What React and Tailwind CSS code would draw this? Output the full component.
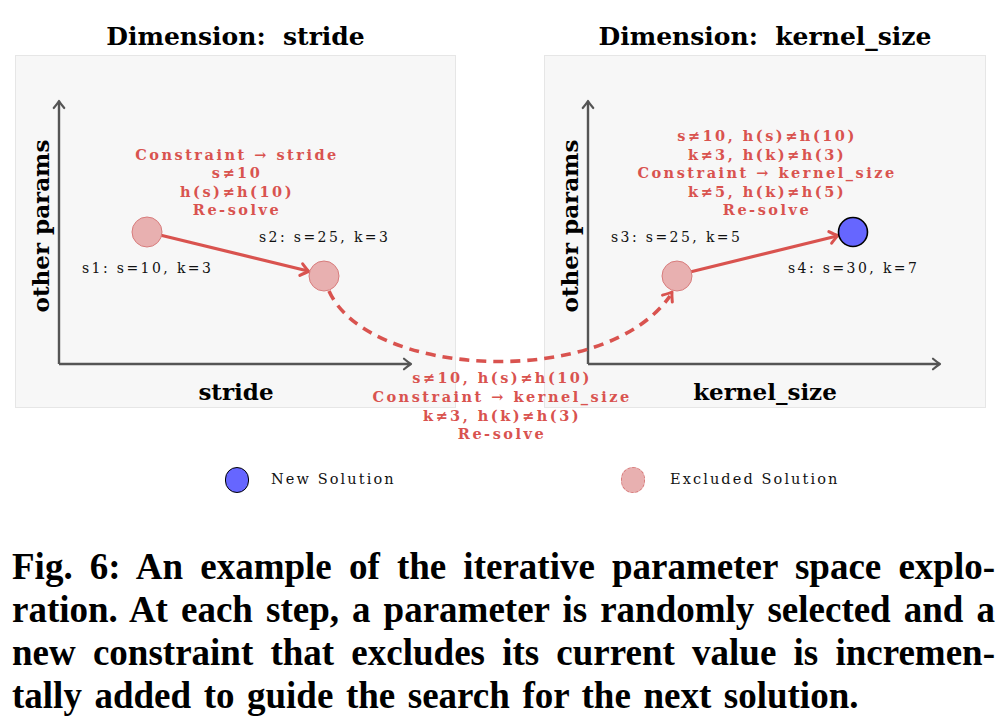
import React from "react";

const RED = "#d9534f";

function Chevron({ x, y, angle, color, w = 2.2, size = 8 }) {
  return (
    <g transform={`translate(${x} ${y}) rotate(${angle})`}>
      <path
        d={`M ${-size} ${-size * 0.75} Q ${-size * 0.35} ${-size * 0.2} 0 0 Q ${-size * 0.35} ${size * 0.2} ${-size} ${size * 0.75}`}
        fill="none"
        stroke={color}
        strokeWidth={w}
        strokeLinecap="round"
        strokeLinejoin="round"
      />
    </g>
  );
}

function Figure() {
  const ff = "'DejaVu Serif', serif";
  const redText = { fontFamily: ff, fontWeight: 700, fontSize: 14.5, letterSpacing: 2.5, fill: RED };
  const blackText = { fontFamily: ff, fontWeight: 400, fontSize: 14, letterSpacing: 2.4, fill: "#111" };
  const axisText = { fontFamily: ff, fontWeight: 700, fontSize: 23, fill: "#000" };
  return (
    <svg
      className="absolute top-0 left-0 pointer-events-none"
      width="1008"
      height="520"
      viewBox="0 0 1008 520"
    >
      <g stroke="#555" strokeWidth="2.4" fill="none">
        <line x1="59" y1="364" x2="59" y2="102" />
        <line x1="59" y1="364" x2="410" y2="364" />
        <line x1="588" y1="364" x2="588" y2="102" />
        <line x1="588" y1="364" x2="939" y2="364" />
      </g>
      <Chevron x={59} y={101} angle={-90} color="#555" w={2.2} size={7} />
      <Chevron x={411} y={364} angle={0} color="#555" w={2.2} size={7} />
      <Chevron x={588} y={101} angle={-90} color="#555" w={2.2} size={7} />
      <Chevron x={940} y={364} angle={0} color="#555" w={2.2} size={7} />

      <path
        d="M 329 291 C 368 378, 604 390, 670 296"
        fill="none"
        stroke={RED}
        strokeWidth="3.6"
        strokeDasharray="10 7"
      />
      <Chevron x={672} y={292} angle={-55} color={RED} w={3} size={8} />

      <line x1="160" y1="235" x2="308" y2="271" stroke={RED} strokeWidth="3.2" />
      <Chevron x={309} y={271.5} angle={13.7} color={RED} w={3} size={8} />
      <line x1="690" y1="272" x2="837" y2="236" stroke={RED} strokeWidth="3.2" />
      <Chevron x={838} y={235.5} angle={-13.7} color={RED} w={3} size={8} />

      <circle cx="147" cy="232" r="15" fill="#e8b0b0" stroke="#d87c7c" strokeWidth="1" />
      <circle cx="324" cy="276" r="15" fill="#e8b0b0" stroke="#d87c7c" strokeWidth="1" />
      <circle cx="677" cy="276" r="15" fill="#e8b0b0" stroke="#d87c7c" strokeWidth="1" />
      <circle cx="853" cy="232" r="14.5" fill="#6666ff" stroke="#000" strokeWidth="1.6" />

      <g textAnchor="middle" style={redText}>
        <text x="237" y="160">Constraint → stride</text>
        <text x="237" y="178">s≠10</text>
        <text x="237" y="197">h(s)≠h(10)</text>
        <text x="237" y="215">Re-solve</text>
      </g>
      <g textAnchor="middle" style={redText}>
        <text x="767" y="141">s≠10, h(s)≠h(10)</text>
        <text x="767" y="160">k≠3, h(k)≠h(3)</text>
        <text x="767" y="178">Constraint → kernel_size</text>
        <text x="767" y="197">k≠5, h(k)≠h(5)</text>
        <text x="767" y="215">Re-solve</text>
      </g>
      <g textAnchor="middle" style={redText}>
        <text x="502" y="383">s≠10, h(s)≠h(10)</text>
        <text x="502" y="402">Constraint → kernel_size</text>
        <text x="502" y="421">k≠3, h(k)≠h(3)</text>
        <text x="502" y="439">Re-solve</text>
      </g>

      <g style={blackText}>
        <text x="82" y="273">s1: s=10, k=3</text>
        <text x="259" y="242">s2: s=25, k=3</text>
        <text x="611" y="242">s3: s=25, k=5</text>
        <text x="788" y="273">s4: s=30, k=7</text>
      </g>

      <g textAnchor="middle" style={axisText}>
        <text x="236" y="400">stride</text>
        <text x="765" y="400">kernel_size</text>
        <text x="49" y="226" transform="rotate(-90 49 226)">other params</text>
        <text x="578" y="226" transform="rotate(-90 578 226)">other params</text>
      </g>
    </svg>
  );
}

export default function App() {
  const serif = { fontFamily: "'DejaVu Serif', serif" };
  const cap = { fontFamily: "'Liberation Serif', 'Times New Roman', serif" };
  return (
    <div className="w-[1008px] h-[725px] bg-white overflow-hidden">
      <div className="relative w-[1008px]">
        <div className="flex pl-[15px] gap-[88px]">
          <div className="w-[441px] flex flex-col">
            <div className="h-[55px] flex items-end justify-center pb-[6px]">
              <span className="text-[25px] leading-[25px] font-bold text-black" style={serif}>
                Dimension:&nbsp; stride
              </span>
            </div>
            <div className="h-[353px] bg-[#f7f7f7] border border-[#e6e6e6]" />
          </div>
          <div className="w-[442px] flex flex-col">
            <div className="h-[55px] flex items-end justify-center pb-[6px]">
              <span className="text-[25px] leading-[25px] font-bold text-black" style={serif}>
                Dimension:&nbsp; kernel_size
              </span>
            </div>
            <div className="h-[353px] bg-[#f7f7f7] border border-[#e6e6e6]" />
          </div>
        </div>

        <div className="flex items-center mt-[59px] h-[26px]">
          <div className="w-[621px] pl-[225px] flex items-center">
            <div className="w-[24px] h-[26px] rounded-full bg-[#6666ff] border-[1.5px] border-black" />
            <span className="ml-[22px] text-[14.5px] tracking-[2.1px] text-[#111]" style={serif}>
              New Solution
            </span>
          </div>
          <div className="flex items-center">
            <div className="w-[24px] h-[26px] rounded-full bg-[#e8b0b0] border border-dashed border-[#d87c7c]" />
            <span className="ml-[25px] text-[14.5px] tracking-[2.1px] text-[#111]" style={serif}>
              Excluded Solution
            </span>
          </div>
        </div>

        <Figure />
      </div>

      <div className="mt-[52px] pl-[12px] w-[995px] text-[37px] leading-[43px] font-bold text-black" style={cap}>
        <div className="whitespace-nowrap text-justify [text-align-last:justify]">
          Fig. 6: An example of the iterative parameter space explo-
        </div>
        <div className="whitespace-nowrap text-justify [text-align-last:justify]">
          ration. At each step, a parameter is randomly selected and a
        </div>
        <div className="whitespace-nowrap text-justify [text-align-last:justify]">
          new constraint that excludes its current value is incremen-
        </div>
        <div className="whitespace-nowrap [word-spacing:3.3px]">
          tally added to guide the search for the next solution.
        </div>
      </div>
    </div>
  );
}
